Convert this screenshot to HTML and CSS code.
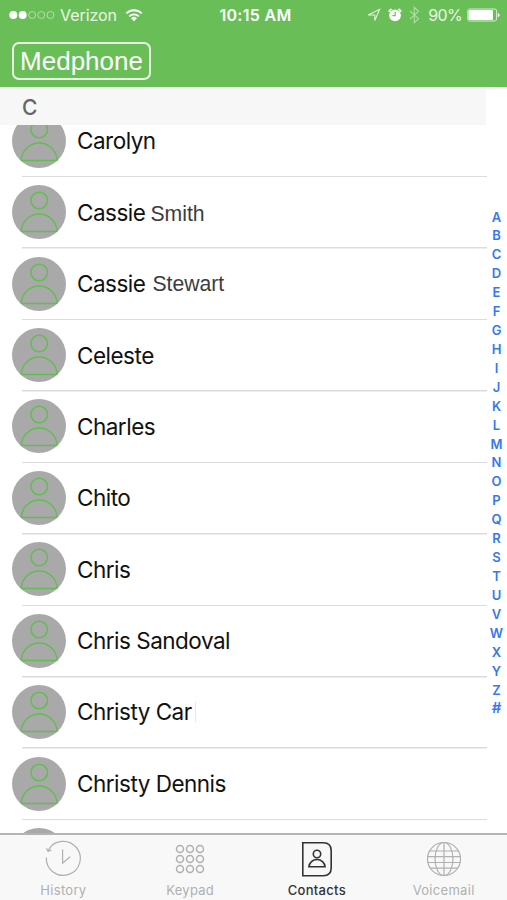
FILE: index.html
```html
<!DOCTYPE html>
<html lang="en">
<head>
    <meta charset="UTF-8" />
    <title>Medphone - Contacts</title>
    <link rel="stylesheet" href="styles.css">
</head>
<body>
    <svg class="defs">
        <symbol id="person" viewBox="0 0 54 54">
            <circle cx="27.2" cy="15.5" r="8.3" />
            <path d="M9.2 46.4C9.8 36.5 17.5 29 27.2 29s17.4 7.5 18 17.4z" />
        </symbol>
    </svg>

    <header class="header">
        <div class="status">
            <div class="status-left">
                <svg class="signal" width="46" height="10" viewBox="0 0 46 10">
                    <circle class="on" cx="4.3" cy="5" r="4" />
                    <circle class="on" cx="13.7" cy="5" r="4" />
                    <circle class="off" cx="23.2" cy="5" r="3.5" />
                    <circle class="off" cx="32.3" cy="5" r="3.5" />
                    <circle class="off" cx="41.5" cy="5" r="3.5" />
                </svg>
                <span class="carrier">Verizon</span>
                <svg class="wifi" width="18" height="14" viewBox="0 0 18 14">
                    <path d="M1.3 5.4a11 11 0 0 1 15.4 0M4.2 8.3a6.9 6.9 0 0 1 9.6 0" />
                    <path class="dot" d="M9 13.2l-3-3a4.3 4.3 0 0 1 6 0z" />
                </svg>
            </div>
            <span class="time">10:15 AM</span>
            <div class="status-right">
                <svg class="location" width="14" height="14" viewBox="0 0 14 14">
                    <path d="M1.2 7L12.600 1.300 7.800 12.600V7z" />
                </svg>
                <svg class="alarm" width="14" height="14" viewBox="0 0 14 14">
                    <circle cx="7" cy="7.3" r="5.9" />
                    <path class="bell" d="M.8 3.8A7.5 7.5 0 0 1 3.5 1M13.2 3.8A7.5 7.5 0 0 0 10.5 1" />
                    <path class="hands" d="M7.2 3.8v3.900H4.500" />
                </svg>
                <svg class="bluetooth" width="11" height="18" viewBox="0 0 11 18">
                    <path d="M1 5l8.500 7.700-4.200 4V1.300l4.200 4L1 13" />
                </svg>
                <span class="percent">90%</span>
                <svg class="battery" width="33" height="14" viewBox="0 0 33 14">
                    <rect class="case" x=".8" y="1" width="28.8" height="12" rx="1.8" />
                    <rect class="charge" x="1.5" y="2" width="24.5" height="10" rx="1" />
                    <path class="charge" d="M30.8 5c2.400.8 2.400 3.400 0 4.200z" />
                </svg>
            </div>
        </div>
        <h1 class="brand">Medphone</h1>
    </header>

    <main class="contacts">
        <div class="section">C</div>
        <div class="list">
            <div class="row"><svg class="avatar"><use href="#person" /></svg><span class="name">Carolyn</span></div>
            <div class="row"><svg class="avatar"><use href="#person" /></svg><span class="name">Cassie</span><span class="last">Smith</span></div>
            <div class="row"><svg class="avatar"><use href="#person" /></svg><span class="name">Cassie</span><span class="last stewart">Stewart</span></div>
            <div class="row"><svg class="avatar"><use href="#person" /></svg><span class="name">Celeste</span></div>
            <div class="row"><svg class="avatar"><use href="#person" /></svg><span class="name">Charles</span></div>
            <div class="row"><svg class="avatar"><use href="#person" /></svg><span class="name">Chito</span></div>
            <div class="row"><svg class="avatar"><use href="#person" /></svg><span class="name">Chris</span></div>
            <div class="row"><svg class="avatar"><use href="#person" /></svg><span class="name">Chris Sandoval</span></div>
            <div class="row"><svg class="avatar"><use href="#person" /></svg><span class="name cut">Christy Car</span></div>
            <div class="row"><svg class="avatar"><use href="#person" /></svg><span class="name">Christy Dennis</span></div>
            <div class="row"><svg class="avatar"><use href="#person" /></svg></div>
        </div>
        <nav class="index">
            <span>A</span><span>B</span><span>C</span><span>D</span><span>E</span><span>F</span><span>G</span>
            <span>H</span><span>I</span><span>J</span><span>K</span><span>L</span><span>M</span><span>N</span>
            <span>O</span><span>P</span><span>Q</span><span>R</span><span>S</span><span>T</span><span>U</span>
            <span>V</span><span>W</span><span>X</span><span>Y</span><span>Z</span><span class="hash">#</span>
        </nav>
    </main>

    <footer class="tabs">
        <div class="tab">
            <svg width="38" height="38" viewBox="0 0 38 38">
                <path d="M4.2 10.5A17 17 0 1 1 2.300 17.500M2.300 17.500l.3 4M2.500 8.300l1.500 3 3.300-1.200M18.600 9.500v13.600l7.500-6.300" />
            </svg>
            <span>History</span>
        </div>
        <div class="tab">
            <svg class="keypad" width="38" height="38" viewBox="0 0 38 38">
                <circle cx="9" cy="9" r="3.5" /><circle cx="19" cy="9" r="3.5" /><circle cx="29" cy="9" r="3.5" />
                <circle cx="9" cy="19" r="3.5" /><circle cx="19" cy="19" r="3.5" /><circle cx="29" cy="19" r="3.5" />
                <circle cx="9" cy="29" r="3.5" /><circle cx="19" cy="29" r="3.5" /><circle cx="29" cy="29" r="3.5" />
            </svg>
            <span>Keypad</span>
        </div>
        <div class="tab active">
            <svg width="38" height="38" viewBox="0 0 38 38">
                <path d="M4.800 2.800h20.500q7.900 0 7.900 7.900v17.100q0 7.900-7.900 7.900H4.800z" />
                <circle cx="19" cy="14" r="3.7" />
                <path d="M10.900 26.800c.4-4.300 3.800-7.300 8.100-7.300s7.700 3 8.100 7.300z" />
            </svg>
            <span>Contacts</span>
        </div>
        <div class="tab">
            <svg width="38" height="38" viewBox="0 0 38 38">
                <circle cx="19" cy="19" r="16.5" />
                <ellipse cx="19" cy="19" rx="9" ry="16.5" />
                <path d="M19 2.500v33M4.500 11h29M2.500 16.700h33M2.500 22.500h33M5 28.200h28" />
            </svg>
            <span>Voicemail</span>
        </div>
    </footer>
</body>
</html>
```
FILE: styles.css
```css
body {
    margin: 0;
    height: 900px;
    display: flex;
    flex-direction: column;
    overflow: hidden;
    background-color: #fff;
    font-family: Inter, "Liberation Sans", sans-serif;
}

svg {
    display: block;
    flex: none;
    fill: none;
}

.defs {
    position: absolute;
    width: 0;
    height: 0;
}

.header {
    height: 87px;
    flex: none;
    background-color: #69be57;
    color: #fff;
}

/* Status bar */
.status {
    display: grid;
    grid-template-columns: 1fr auto 1fr;
    align-items: center;
    height: 30px;
    padding: 0 7px 0 9px;
    margin-bottom: 12px;
}

.status-left,
.status-right {
    display: flex;
    align-items: center;
}

.status-right {
    justify-content: flex-end;
}

.on,
.wifi .dot,
.alarm circle,
.charge {
    fill: #fff;
}

.off {
    stroke: #b3e0a8;
    stroke-width: 1;
}

.carrier {
    margin: 0 8px 0 5px;
    font-size: 16px;
    letter-spacing: -0.05px;
    color: #e9f7e6;
}

.wifi path {
    stroke: #fff;
    stroke-width: 1.8;
}

.wifi .dot {
    stroke: none;
}

.time {
    padding-left: 2px;
    font-size: 16px;
    font-weight: 600;
    letter-spacing: 0.3px;
}

.location {
    margin-right: 7px;
    stroke: #e3f4df;
    stroke-width: 1.1;
}

.alarm {
    margin-right: 7px;
}

.alarm .bell {
    stroke: #fff;
    stroke-width: 1.6;
}

.alarm .hands {
    stroke: #69be57;
    stroke-width: 1.2;
}

.bluetooth {
    margin-right: 8px;
    stroke: #b0dea5;
    stroke-width: 1.1;
}

.percent {
    margin-right: 5px;
    font-size: 16px;
    letter-spacing: -0.7px;
    color: #e9f7e6;
}

.case {
    stroke: #d5efd0;
    stroke-width: 1;
}

.brand {
    box-sizing: border-box;
    width: 139px;
    height: 38px;
    margin: 0 0 0 12px;
    border: 2px solid #e9f8e5;
    border-radius: 7px;
    font-family: "Liberation Sans", Arial, sans-serif;
    font-size: 26px;
    font-weight: normal;
    line-height: 35px;
    text-align: center;
}

/* Contact list */
.contacts {
    position: relative;
    flex: 1;
    display: flex;
    flex-direction: column;
    min-height: 0;
}

.section {
    height: 38px;
    flex: none;
    width: 464px;
    padding-left: 22px;
    background-color: #f7f7f7;
    color: #666;
    font-size: 21px;
    font-weight: 500;
    line-height: 41px;
}

.list {
    flex: 1;
    min-height: 0;
    display: flex;
    flex-direction: column;
    justify-content: flex-start;
    overflow: hidden;
}

.row {
    box-sizing: border-box;
    display: flex;
    align-items: center;
    flex: none;
    height: 71.45px;
    width: 487px;
    padding: 0 0 2px 12px;
    background: linear-gradient(#dcdcdc, #dcdcdc) 22px 100% / 465px 1.5px no-repeat;
}

/* first row is scrolled under the section header */
.row:first-child {
    margin-top: -19px;
}

.avatar {
    width: 54px;
    height: 54px;
    margin-right: 11px;
    border-radius: 50%;
    background-color: #a9a9a9;
    stroke: #63bd52;
    stroke-width: 1.5;
}

.name {
    font-size: 22.5px;
    letter-spacing: -0.5px;
    color: #111;
    white-space: nowrap;
}

.cut {
    padding-right: 3px;
    border-right: 1px solid #e8e8e8;
    line-height: 20px;
}

.last {
    margin: 3px 0 0 5px;
    font-family: "Liberation Sans", Arial, sans-serif;
    font-size: 21.2px;
    color: #3c3c40;
}

.stewart {
    margin: 1px 0 0 7px;
}

/* Alphabet on the right edge */
.index {
    position: absolute;
    top: 120.5px;
    right: 0;
    width: 21px;
    display: flex;
    flex-direction: column;
    color: #3579ee;
    font-size: 13px;
    font-weight: 600;
    line-height: 18.92px;
    text-align: center;
}

.hash {
    font-size: 15px;
}

/* Bottom tabs */
.tabs {
    box-sizing: border-box;
    display: flex;
    flex: none;
    height: 67px;
    border-top: 2px solid #b4b4b4;
    background-color: #f8f8f8;
}

.tab {
    flex: 1;
    display: flex;
    flex-direction: column;
    align-items: center;
    padding-top: 5px;
    color: #b0b0b0;
    font-size: 13px;
    letter-spacing: 0.3px;
}

.tab svg {
    stroke: currentColor;
    stroke-width: 1.2;
}

.tab .keypad {
    stroke-width: 1.5;
}

.tab span {
    margin-top: 4px;
    line-height: 16px;
}

.tab.active {
    color: #333;
    font-weight: 500;
}

.tab.active svg {
    stroke-width: 1.6;
}
```
